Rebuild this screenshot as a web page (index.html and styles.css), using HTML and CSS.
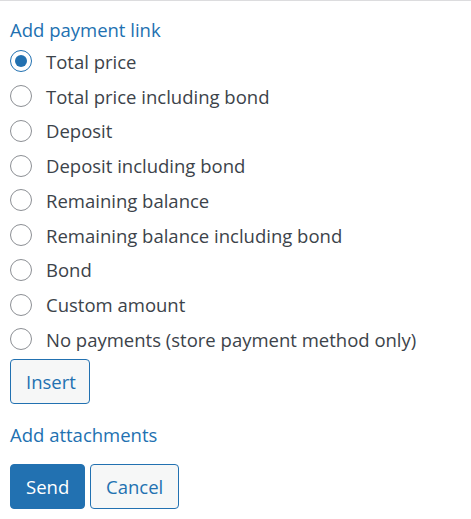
FILE: index.html
```html
<!DOCTYPE html>
<html>
<head>
<meta charset="utf-8">
<link rel="stylesheet" href="styles.css">
</head>
<body>
<div class="panel">
  <div class="heading">Add payment link</div>
  <div class="options">
    <label class="opt"><span class="radio checked"></span><span>Total price</span></label>
    <label class="opt"><span class="radio"></span><span>Total price including bond</span></label>
    <label class="opt"><span class="radio"></span><span>Deposit</span></label>
    <label class="opt"><span class="radio"></span><span>Deposit including bond</span></label>
    <label class="opt"><span class="radio"></span><span>Remaining balance</span></label>
    <label class="opt"><span class="radio"></span><span>Remaining balance including bond</span></label>
    <label class="opt"><span class="radio"></span><span>Bond</span></label>
    <label class="opt"><span class="radio"></span><span>Custom amount</span></label>
    <label class="opt"><span class="radio"></span><span>No payments (store payment method only)</span></label>
  </div>
  <button class="btn secondary insert">Insert</button>
  <div class="heading attach">Add attachments</div>
  <div class="actions">
    <button class="btn primary">Send</button>
    <button class="btn secondary">Cancel</button>
  </div>
</div>
</body>
</html>
```
FILE: styles.css
```css
html, body {
  margin: 0;
  padding: 0;
  background: #fff;
}
body {
  font-family: "Open Sans", "Noto Sans", sans-serif;
  font-size: 18.5px;
  color: #3c434a;
}
.panel {
  border-top: 1px solid #dcdcde;
  padding: 16px 10px 0 10px;
}
.heading {
  color: #2271b1;
  line-height: 26px;
}
.options {
  display: flex;
  flex-direction: column;
  margin-top: 1px;
}
.opt {
  display: flex;
  align-items: center;
  gap: 14px;
  height: 34.75px;
}
.radio {
  box-sizing: border-box;
  width: 22px;
  height: 22px;
  border: 1px solid #8c8f94;
  border-radius: 50%;
  display: flex;
  align-items: center;
  justify-content: center;
  background: #fff;
}
.radio.checked {
  border-color: #2271b1;
}
.radio.checked::after {
  content: "";
  width: 12px;
  height: 12px;
  border-radius: 50%;
  background: #2271b1;
}
.btn {
  font-family: inherit;
  font-size: 18.5px;
  box-sizing: border-box;
  height: 45px;
  border-radius: 4px;
  padding: 0 15px;
  border: 1px solid #2271b1;
  cursor: pointer;
}
.secondary {
  background: #f6f7f7;
  color: #2271b1;
}
.primary {
  background: #2271b1;
  color: #fff;
}
.insert {
  margin-top: 2px;
  width: 80px;
}
.attach {
  margin-top: 18px;
}
.actions {
  display: flex;
  gap: 5px;
  margin-top: 16px;
}
.actions .primary { width: 75px; }
.actions .secondary { width: 89px; }
```
